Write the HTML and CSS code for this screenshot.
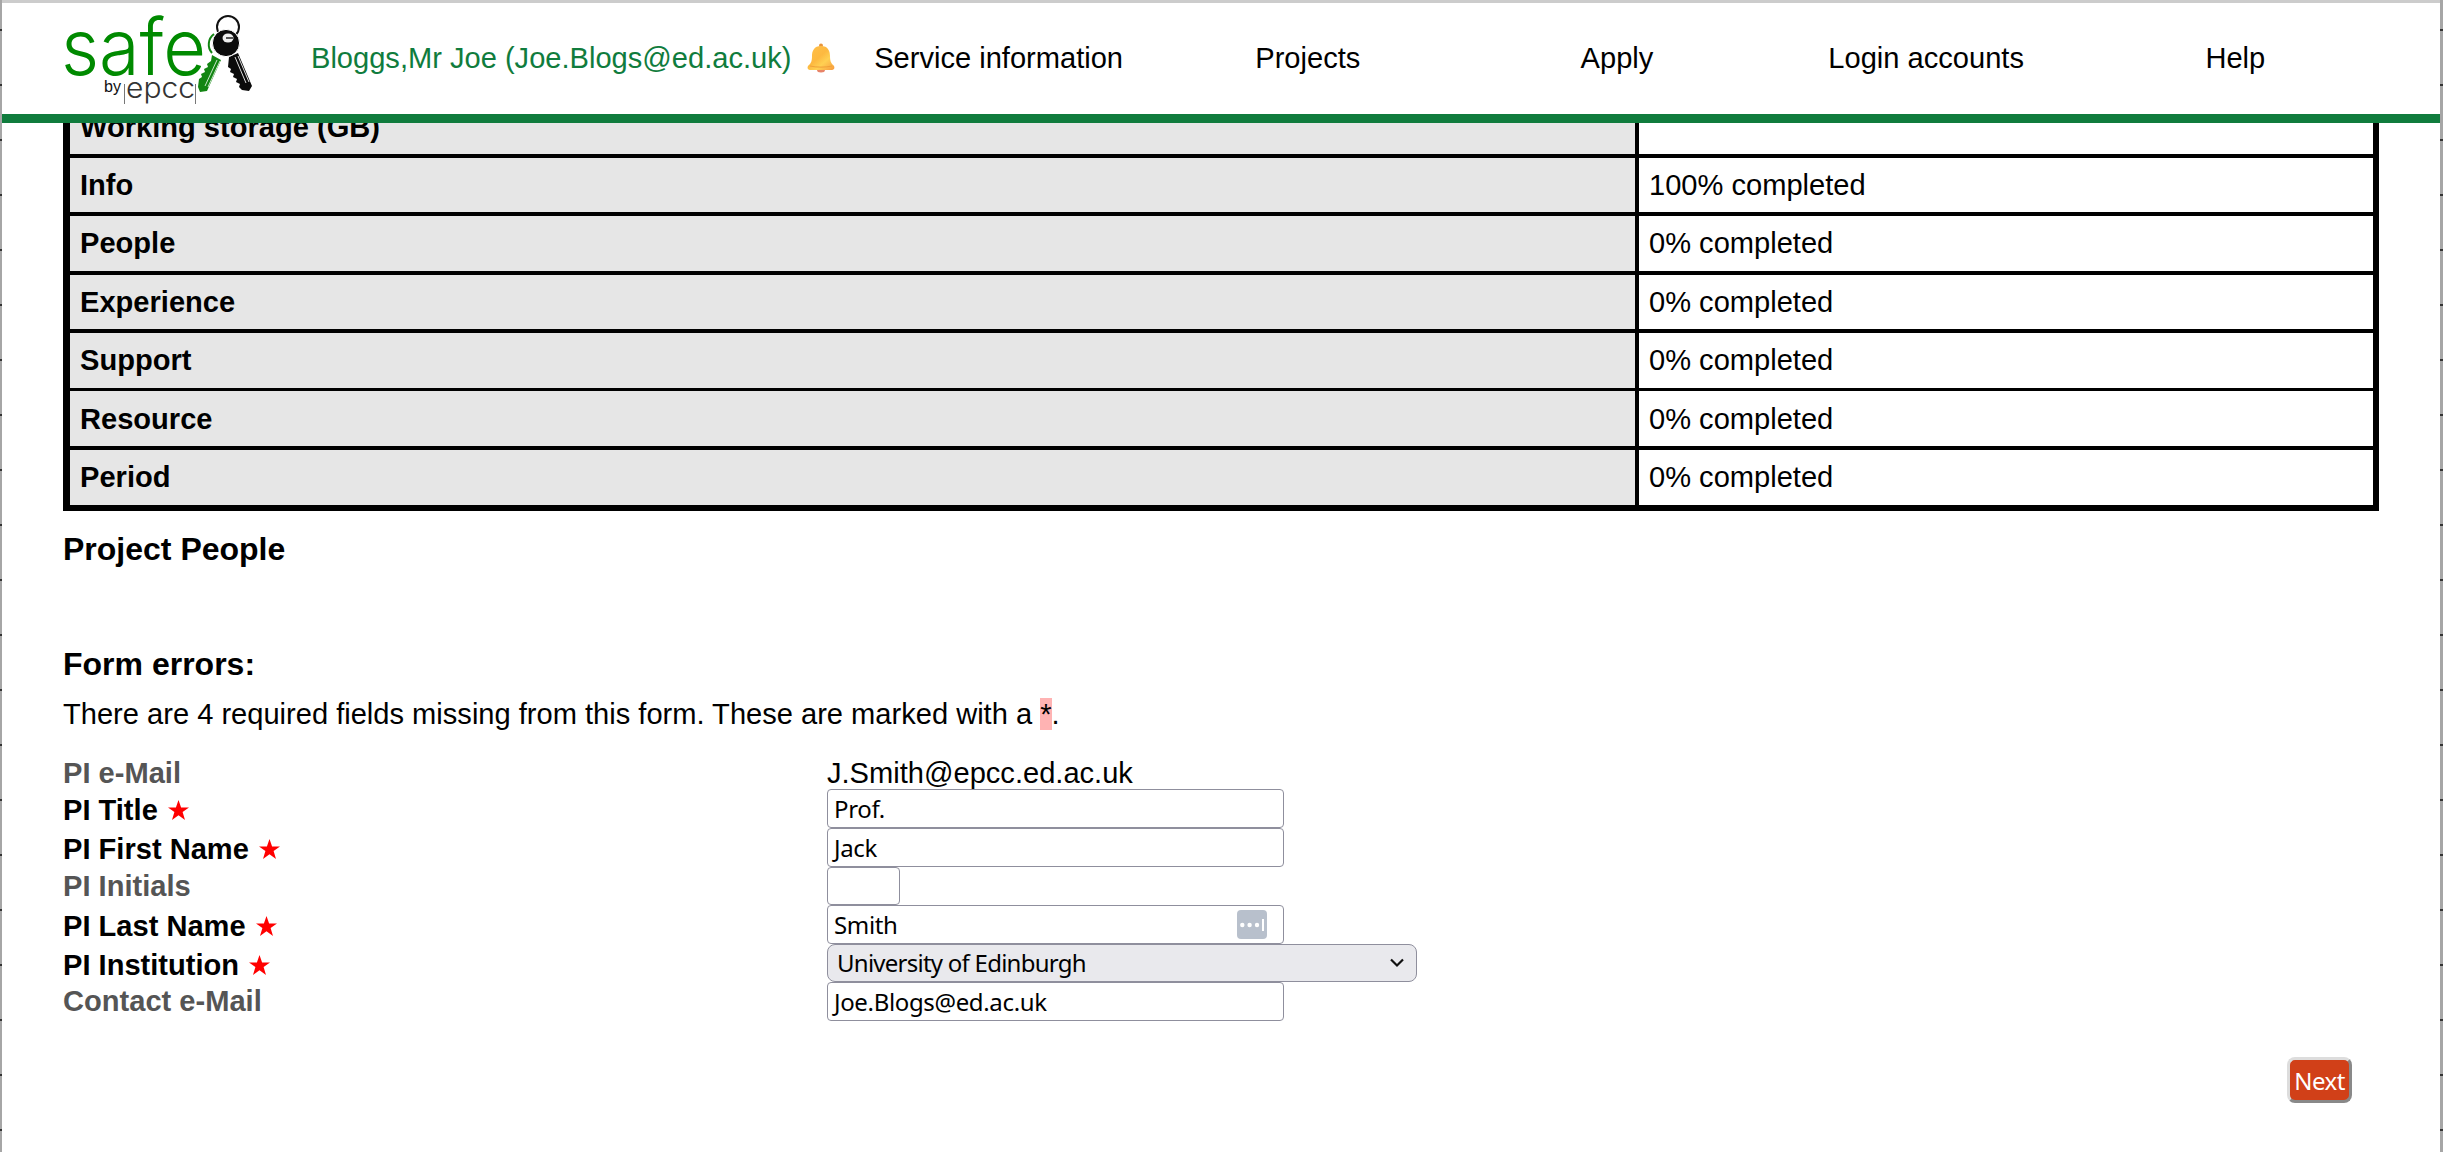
FILE: index.html
```html
<!DOCTYPE html>
<html lang="en">
<head>
<meta charset="utf-8">
<title>SAFE - Project People</title>
<link rel="stylesheet" href="styles.css">
</head>
<body>
<div class="window">
  <header class="topbar">
    <svg class="logo" width="190" height="96" viewBox="0 0 190 96">
      <g class="logo-text">
        <text class="logo-safe" x="-2" y="64" textLength="145" lengthAdjust="spacingAndGlyphs">safe</text>
        <text class="logo-by" x="41" y="81" textLength="17" lengthAdjust="spacingAndGlyphs">by</text>
        <text class="logo-epcc" x="63" y="87" textLength="69" lengthAdjust="spacingAndGlyphs">epcc</text>
      </g>
      <path d="M61.5 73v20M132.500 73v20" stroke="#777" stroke-width="1"/>
      <path d="M151 23A13 13 0 0 0 149 42" fill="none" stroke="#128512" stroke-width="2"/>
      <path d="M149 44l9 5-14 31-7 1-2-5 1-8 3-2-1-3 4-2-1-3 4-2-1-3 4-3z" fill="#128512"/>
      <path d="M154 49l-12 26M157 50l-12 26" stroke="#c9e6c9" stroke-width="1"/>
      <circle cx="165" cy="16" r="11" fill="none" stroke="#111" stroke-width="2"/>
      <path d="M166 46l9-4 14 33-3 5-7-1-3-3 1-3-4-2 1-3-4-2 1-3-4-2 1-3-3-2z" fill="#0b0b0b"/>
      <path d="M172 46l11 26M175 45l11 26" stroke="#ddd" stroke-width="1"/>
      <circle cx="163" cy="32" r="13.600" fill="#0b0b0b" stroke="#fff"/>
      <ellipse cx="165" cy="27" rx="5.500" ry="4.500" fill="#eee"/>
      <path d="M163 27h7" stroke="#222" stroke-width="1.500"/>
    </svg>
    <a class="user">Bloggs,Mr Joe (Joe.Blogs@ed.ac.uk)</a>
    <svg class="bell" width="28" height="30" viewBox="0 0 28 30">
      <defs><linearGradient id="b" x1="0" y1="0" x2="1" y2="1"><stop offset="0" stop-color="#ffc04a"/><stop offset=".45" stop-color="#fdb940"/><stop offset=".65" stop-color="#ffd052"/><stop offset="1" stop-color="#f79a3e"/></linearGradient></defs>
      <circle cx="14" cy="2.500" r="2" fill="#e8953c"/>
      <ellipse cx="14" cy="27" rx="4" ry="2.500" fill="#e88468"/>
      <path d="M14 3C7 3 5 8 5 13c0 5-1 7-3 9-2 1-2 5 1 5h22c3 0 3-4 1-5-2-2-3-4-3-9 0-5-2-10-9-10z" fill="url(#b)"/>
      <path d="M3 23c6 1.500 16 1.500 22 0" fill="none" stroke="#f0a038" stroke-width="1"/>
    </svg>
    <nav class="menu">
      <a>Service information</a><a>Projects</a><a>Apply</a><a>Login accounts</a><a>Help</a>
    </nav>
  </header>
  <main>
    <div class="status">
      <div class="row clipped"><b>Working storage (GB)</b><span></span></div>
      <div class="row"><b>Info</b><span>100% completed</span></div>
      <div class="row tall"><b>People</b><span>0% completed</span></div>
      <div class="row"><b>Experience</b><span>0% completed</span></div>
      <div class="row tall"><b>Support</b><span>0% completed</span></div>
      <div class="row thin"><b>Resource</b><span>0% completed</span></div>
      <div class="row tall"><b>Period</b><span>0% completed</span></div>
    </div>
    <h2 class="people">Project People</h2>
    <h2 class="errors">Form errors:</h2>
    <p class="message">There are 4 required fields missing from this form. These are marked with a <mark>*</mark>.</p>
    <div class="form">
      <label class="optional first">PI e-Mail</label><div class="value">J.Smith@epcc.ed.ac.uk</div>
      <label>PI Title <svg class="star" viewBox="0 0 21 20"><path d="M10.500 0l2.600 7.500H21l-6.400 4.600L17 20l-6.500-4.800L4 20l2.400-7.900L0 7.500h7.900z"/></svg></label><div class="input">Prof.</div>
      <label>PI First Name <svg class="star" viewBox="0 0 21 20"><path d="M10.500 0l2.600 7.500H21l-6.400 4.600L17 20l-6.500-4.800L4 20l2.400-7.900L0 7.500h7.900z"/></svg></label><div class="input">Jack</div>
      <label class="optional">PI Initials</label><div class="input short"></div>
      <label>PI Last Name <svg class="star" viewBox="0 0 21 20"><path d="M10.500 0l2.600 7.500H21l-6.400 4.600L17 20l-6.500-4.800L4 20l2.400-7.900L0 7.500h7.900z"/></svg></label>
      <div class="input"><span>Smith</span><svg class="autofill" width="30" height="30" viewBox="0 0 30 30"><rect width="30" height="29" rx="4" fill="#b8c0cc"/><g fill="#fff"><circle cx="5.300" cy="15" r="2.200"/><circle cx="12.600" cy="15" r="2.200"/><circle cx="20" cy="15" r="2.200"/><path d="M25 9h2v12h-2z"/></g></svg></div>
      <label>PI Institution <svg class="star" viewBox="0 0 21 20"><path d="M10.500 0l2.600 7.500H21l-6.400 4.600L17 20l-6.500-4.800L4 20l2.400-7.900L0 7.500h7.900z"/></svg></label>
      <div class="input select"><span>University of Edinburgh</span><svg width="14" height="10" viewBox="0 0 14 10"><path d="M1 1.500l6 6 6-6" fill="none" stroke="#111" stroke-width="2.200"/></svg></div>
      <label class="optional">Contact e-Mail</label><div class="input">Joe.Blogs@ed.ac.uk</div>
    </div>
    <div class="actions"><button class="next">Next</button></div>
  </main>
</div>
</body>
</html>
```
FILE: styles.css
```css
* { box-sizing: border-box; }
body {
  margin: 0;
  height: 1152px;
  overflow: hidden;
  background: repeating-linear-gradient(#a6a6a6 0 29px, #333 29px 31px, #a6a6a6 31px 55px);
  font: 29.08px/34px "Liberation Sans", Arial, sans-serif;
  color: #000;
}
.window {
  margin: 0 3px 0 2px;
  height: 1152px;
  background: #fff;
  overflow: hidden;
}
.topbar {
  display: flex;
  align-items: flex-start;
  height: 123px;
  padding: 8px 0 0 61px;
  background: #fff;
  border-top: 3px solid #ccc;
  border-bottom: 9px solid #107c3d;
}
.logo { flex: none; overflow: visible; }
.logo-safe { font: 300 78px Inter, sans-serif; fill: #008a00; }
.logo-by { font: 17px "Liberation Sans", sans-serif; fill: #111; }
.logo-epcc { font: 300 28px Inter, sans-serif; fill: #333; }
.user {
  width: 496px;
  margin: 30px 0 0 58px;
  color: #107c3d;
  white-space: nowrap;
}
.bell { margin: 32px 0 0; flex: none; }
.menu {
  display: grid;
  grid-template-columns: repeat(5, 309.2px);
  margin: 30px 0 0 9px;
  text-align: center;
}
main { padding: 0 61px; }
.status {
  width: 2316px;
  border: solid #000;
  border-width: 0 6px 6px 7px;
}
.row {
  display: grid;
  grid-template-columns: 1565px 4px 1fr;
  height: 58px;
  border-top: 4px solid #000;
  background: linear-gradient(90deg, #e6e6e6 1565px, #000 1565px 1569px, #fff 1569px);
  line-height: 54px;
}
.row.tall { height: 59px; }
.row.thin { height: 58px; border-top-width: 3px; line-height: 56px; }
.row b { padding-left: 10px; }
.row span { grid-column: 3; padding-left: 10px; }
.row.clipped { height: 31px; border-top: 0; line-height: 8px; overflow: hidden; }
h2 { margin: 0; font-size: 32px; line-height: 36px; }
.people { margin-top: 20px; }
.errors { margin-top: 79px; }
.message { margin: 15px 0 25px; height: 34px; }
mark { background: #ffb3b3; color: #000; }
.form {
  display: grid;
  grid-template-columns: 764px 1fr;
  grid-template-rows: 33px 39px 39px 38px 39px 38px 39px;
}
.form label { padding-top: 4px; font-weight: bold; }
.form .optional { padding-top: 2px; color: #555; }
.form .first { padding-top: 0; }
.value { line-height: 34px; }
.star {
  width: 21px;
  height: 20px;
  margin-left: 2px;
  fill: #f00;
}
.input {
  display: flex;
  align-items: center;
  justify-content: space-between;
  width: 457px;
  padding: 0 16px 0 6px;
  border: 1px solid #8f8f9d;
  border-radius: 4px;
  background: #fff;
  font: 24px/36px "Noto Sans", sans-serif;
  letter-spacing: -0.35px;
}
.short { width: 73px; }
.select {
  width: 590px;
  padding: 0 12px 0 9px;
  border-radius: 8px;
  background: #e9e9ed;
  letter-spacing: -0.75px;
}
.actions { display: flex; justify-content: flex-end; padding: 36px 27px 0 0; }
.next {
  width: 65px;
  height: 46px;
  padding: 0;
  border: 3px outset #ddd;
  border-radius: 8px;
  background: #d14018;
  color: #fff;
  font: 24px "Noto Sans", sans-serif;
  letter-spacing: -0.5px;
}
```
